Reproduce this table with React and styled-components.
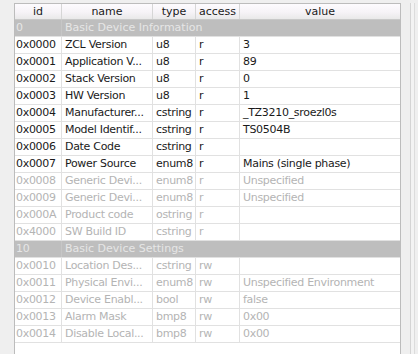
import React from "react";
import styled, { createGlobalStyle } from "styled-components";

const GlobalStyle = createGlobalStyle`
  html, body {
    margin: 0;
    padding: 0;
    background: #efefef;
  }
`;

const Page = styled.div`
  display: flex;
  width: 418px;
  height: 354px;
  padding: 3px 0 0 14px;
  box-sizing: border-box;
  background: #efefef;
  font-family: "DejaVu Sans", "Noto Sans", sans-serif;
  font-size: 11px;
  overflow: hidden;
`;

const TableView = styled.div`
  width: 387px;
  flex-shrink: 0;
  background: #ffffff;
  border: 1px solid #bcbcbc;
  border-bottom: none;
  box-sizing: border-box;
`;

const Gutter = styled.div`
  flex: 1;
  display: flex;
  justify-content: flex-end;
  padding-right: 3px;
`;

const GutterLine = styled.div`
  width: 3px;
  border-left: 1px solid #d4d4d4;
  border-right: 1px solid #dcdcdc;
  background: #f3f3f3;
`;

const Row = styled.div`
  display: grid;
  grid-template-columns: 47px 91px 43px 44px 1fr;
  height: ${(p) => (p.$header ? "16px" : "17px")};
  box-sizing: border-box;
  border-bottom: 1px solid ${(p) => (p.$header ? "#c8c8c8" : "#e1e1e1")};
  background: ${(p) =>
    p.$header
      ? "linear-gradient(#fdfbfe, #f6f3f7 55%, #e9e9e9)"
      : p.$group
      ? "#bebebe"
      : "#ffffff"};
  color: ${(p) =>
    p.$group ? "#e6e6e6" : p.$disabled ? "#b4b4b4" : "#1a1a1a"};
`;

const Cell = styled.div`
  display: flex;
  align-items: center;
  padding: 0 ${(p) => (p.$first ? "1px" : "3px")};
  justify-content: ${(p) => (p.$center ? "center" : "flex-start")};
  border-right: 1px solid ${(p) => (p.$header ? "#d6d6d6" : p.$group ? "#c6c6c6" : "#e1e1e1")};
  white-space: nowrap;
  overflow: hidden;
  line-height: 16px;
  letter-spacing: ${(p) => (p.$header ? "0" : "-0.3px")};

  &:last-child {
    border-right: none;
  }
`;

const GroupTitle = styled(Cell)`
  grid-column: 2 / 6;
  border-right: none;
  letter-spacing: 0;
`;

const columns = ["id", "name", "type", "access", "value"];

const sections = [
  {
    id: "0",
    title: "Basic Device Information",
    rows: [
      ["0x0000", "ZCL Version", "u8", "r", "3"],
      ["0x0001", "Application V...", "u8", "r", "89"],
      ["0x0002", "Stack Version", "u8", "r", "0"],
      ["0x0003", "HW Version", "u8", "r", "1"],
      ["0x0004", "Manufacturer...", "cstring", "r", "_TZ3210_sroezl0s"],
      ["0x0005", "Model Identif...", "cstring", "r", "TS0504B"],
      ["0x0006", "Date Code", "cstring", "r", ""],
      ["0x0007", "Power Source", "enum8", "r", "Mains (single phase)"],
      ["0x0008", "Generic Devi...", "enum8", "r", "Unspecified", true],
      ["0x0009", "Generic Devi...", "enum8", "r", "Unspecified", true],
      ["0x000A", "Product code", "ostring", "r", "", true],
      ["0x4000", "SW Build ID", "cstring", "r", "", true],
    ],
  },
  {
    id: "10",
    title: "Basic Device Settings",
    rows: [
      ["0x0010", "Location Des...", "cstring", "rw", "", true],
      ["0x0011", "Physical Envi...", "enum8", "rw", "Unspecified Environment", true],
      ["0x0012", "Device Enabl...", "bool", "rw", "false", true],
      ["0x0013", "Alarm Mask", "bmp8", "rw", "0x00", true],
      ["0x0014", "Disable Local...", "bmp8", "rw", "0x00", true],
    ],
  },
];

export default function App() {
  return (
    <>
      <GlobalStyle />
      <Page>
        <TableView>
          <Row $header>
            {columns.map((c) => (
              <Cell key={c} $header $center>
                {c}
              </Cell>
            ))}
          </Row>
          {sections.map((s) => (
            <React.Fragment key={s.id}>
              <Row $group>
                <Cell $group $first>{s.id}</Cell>
                <GroupTitle $group>{s.title}</GroupTitle>
              </Row>
              {s.rows.map((r) => (
                <Row key={r[0]} $disabled={r[5]}>
                  {r.slice(0, 5).map((v, i) => (
                    <Cell key={i} $first={i === 0}>
                      {v}
                    </Cell>
                  ))}
                </Row>
              ))}
            </React.Fragment>
          ))}
        </TableView>
        <Gutter>
          <GutterLine />
        </Gutter>
      </Page>
    </>
  );
}
